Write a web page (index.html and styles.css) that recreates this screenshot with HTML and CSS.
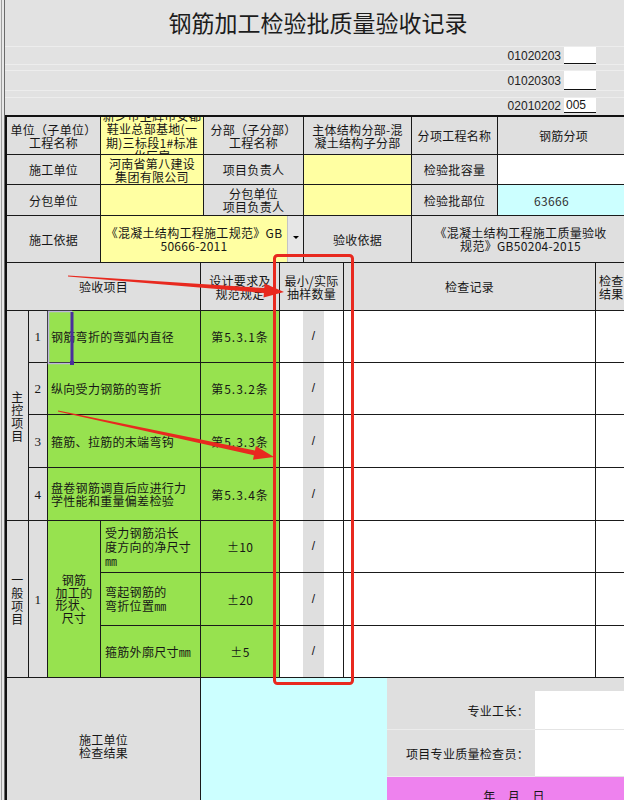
FILE: index.html
```html
<!DOCTYPE html>
<html lang="zh-CN">
<head>
<meta charset="utf-8">
<title>钢筋加工检验批质量验收记录</title>
<link rel="stylesheet" href="styles.css">
</head>
<body>
<div class="sheet">
  <div class="title-area">
    <div class="title">钢筋加工检验批质量验收记录</div>
    <div class="code-row r1"><span class="code">01020203</span><span class="box"></span></div>
    <div class="code-gap gap1"></div>
    <div class="code-row r2"><span class="code">01020303</span><span class="box"></span></div>
    <div class="code-gap gap2"></div>
    <div class="code-row r3"><span class="code">02010202</span><span class="box">005</span></div>
  </div>

  <div class="info">
    <div class="c">单位（子单位）<br>工程名称</div>
    <div class="c y tall">新乡市卫辉市安都<br>鞋业总部基地(一<br>期)三标段1#标准<br>化厂房</div>
    <div class="c">分部（子分部）<br>工程名称</div>
    <div class="c">主体结构分部-混<br>凝土结构子分部</div>
    <div class="c">分项工程名称</div>
    <div class="c">钢筋分项</div>

    <div class="c">施工单位</div>
    <div class="c y">河南省第八建设<br>集团有限公司</div>
    <div class="c">项目负责人</div>
    <div class="c y"></div>
    <div class="c">检验批容量</div>
    <div class="c w"></div>

    <div class="c">分包单位</div>
    <div class="c y"></div>
    <div class="c">分包单位<br>项目负责人</div>
    <div class="c y"></div>
    <div class="c">检验批部位</div>
    <div class="c cy part">63666</div>

    <div class="c">施工依据</div>
    <div class="c y basis">
      <div class="basis-text">《混凝土结构工程施工规范》GB<br>50666-2011</div>
      <div class="dd"><span class="tri"></span></div>
    </div>
    <div class="c">验收依据</div>
    <div class="c span2">《混凝土结构工程施工质量验收<br>规范》GB50204-2015</div>
  </div>

  <div class="items">
    <div class="c hd span4">验收项目</div>
    <div class="c hd">设计要求及<br>规范规定</div>
    <div class="c hd">最小/实际<br>抽样数量</div>
    <div class="c hd">检查记录</div>
    <div class="c hd left">检查<br>结果</div>

    <div class="c vert main">主<br>控<br>项<br>目</div>
    <div class="c num">1</div>
    <div class="c g span2 txt">钢筋弯折的弯弧内直径</div>
    <div class="c g clause">第5.3.1条</div>
    <div class="c sample"><span class="s1"></span><span class="s2">/</span><span class="s3"></span></div>
    <div class="c w"></div>
    <div class="c w"></div>

    <div class="c num">2</div>
    <div class="c g span2 txt">纵向受力钢筋的弯折</div>
    <div class="c g clause">第5.3.2条</div>
    <div class="c sample"><span class="s1"></span><span class="s2">/</span><span class="s3"></span></div>
    <div class="c w"></div>
    <div class="c w"></div>

    <div class="c num">3</div>
    <div class="c g span2 txt">箍筋、拉筋的末端弯钩</div>
    <div class="c g clause">第5.3.3条</div>
    <div class="c sample"><span class="s1"></span><span class="s2">/</span><span class="s3"></span></div>
    <div class="c w"></div>
    <div class="c w"></div>

    <div class="c num">4</div>
    <div class="c g span2 txt">盘卷钢筋调直后应进行力<br>学性能和重量偏差检验</div>
    <div class="c g clause">第5.3.4条</div>
    <div class="c sample"><span class="s1"></span><span class="s2">/</span><span class="s3"></span></div>
    <div class="c w"></div>
    <div class="c w"></div>

    <div class="c vert general">一<br>般<br>项<br>目</div>
    <div class="c num gnum">1</div>
    <div class="c g gname">钢筋<br>加工的<br>形状、<br>尺寸</div>
    <div class="c g txt sub">受力钢筋沿长<br>度方向的净尺寸<br>㎜</div>
    <div class="c g">±10</div>
    <div class="c sample"><span class="s1"></span><span class="s2">/</span><span class="s3"></span></div>
    <div class="c w"></div>
    <div class="c w"></div>

    <div class="c g txt sub">弯起钢筋的<br>弯折位置㎜</div>
    <div class="c g">±20</div>
    <div class="c sample"><span class="s1"></span><span class="s2">/</span><span class="s3"></span></div>
    <div class="c w"></div>
    <div class="c w"></div>

    <div class="c g txt sub">箍筋外廓尺寸㎜</div>
    <div class="c g">±5</div>
    <div class="c sample"><span class="s1"></span><span class="s2">/</span><span class="s3"></span></div>
    <div class="c w"></div>
    <div class="c w"></div>
  </div>

  <div class="result">
    <div class="rc rlabel">施工单位<br>检查结果</div>
    <div class="rc rcyan"></div>
    <div class="rc strip"></div>
    <div class="rc lab">专业工长：</div>
    <div class="rc wv"></div>
    <div class="rc lab">项目专业质量检查员：</div>
    <div class="rc wv"></div>
    <div class="rc date">年　月　日</div>
  </div>

  <svg class="overlay" width="624" height="800" viewBox="0 0 624 800">
    <rect x="48.5" y="311.5" width="23" height="52" fill="none" stroke="#bdb6dc" stroke-width="1.5"/>
    <line x1="72" y1="312" x2="72" y2="363" stroke="#4a2f9c" stroke-width="3"/>
    <rect x="70" y="361" width="4" height="4" fill="#4a2f9c"/>
    <rect x="274.5" y="255.5" width="78" height="428" rx="3" ry="3" fill="none" stroke="#e8291f" stroke-width="3"/>
    <polygon fill="#e8291f" points="68.04,275.5 264.24,288.03 264.58,283.54 284,292 263.54,297.5 263.88,293.01 67.96,276.5"/>
    <polygon fill="#e8291f" points="58.10,410.51 254.96,450.38 255.90,445.98 274,457 252.98,459.68 253.92,455.28 57.90,411.49"/>
  </svg>
</div>
</body>
</html>
```
FILE: styles.css
```css
* { box-sizing: border-box; }
html, body { margin: 0; padding: 0; }
body {
  width: 624px;
  height: 800px;
  overflow: hidden;
  background: #e2e2e2;
  font-family: "Noto Sans CJK SC", "Noto Sans", sans-serif;
  font-size: 12px;
  color: #161616;
}
.sheet {
  position: relative;
  width: 624px;
  height: 800px;
  overflow: hidden;
  padding-left: 5px;
  background: linear-gradient(90deg, #e8e8e8 0 1px, #9e9e9e 1px 2px, #e8e8e8 2px 4px, #6a6a6a 4px 5px, #e2e2e2 5px);
}

/* title area */
.title-area {
  height: 115px;
  display: flex;
  flex-direction: column;
}
.title {
  height: 46px;
  line-height: 44px;
  text-align: center;
  padding-left: 7px;
  font-size: 23px;
  color: #1c1c1c;
}
.code-row {
  display: flex;
  justify-content: flex-end;
  padding-right: 28px;
  border-top: 1px solid #ededed;
}
.r1 { height: 18px; }
.r2 { height: 20px; }
.r3 { height: 16px; }
.code-gap { border-top: 1px solid #ededed; }
.gap1 { height: 6px; }
.gap2 { height: 7px; }
.code {
  font-family: "Liberation Sans", sans-serif;
  font-size: 12px;
  color: #222;
  margin-right: 3px;
  display: flex;
  align-items: center;
}
.box {
  width: 32px;
  background: #fff;
  border-bottom: 1px solid #111;
  font-family: "Liberation Sans", sans-serif;
  font-size: 12px;
  padding-left: 2px;
  display: flex;
  align-items: center;
}

/* generic cell */
.c {
  border-right: 1px solid #1a1a1a;
  border-bottom: 1px solid #1a1a1a;
  background: #dfdfdf;
  display: flex;
  align-items: center;
  justify-content: center;
  text-align: center;
  line-height: 13px;
  white-space: nowrap;
  overflow: hidden;
  letter-spacing: 0.3px;
}
.y { background: #ffffa2; }
.g { background: #97e24f; }
.w { background: #ffffff; }
.cy { background: #ccffff; }

/* info block */
.info {
  display: grid;
  grid-template-columns: 94px 103px 100px 108px 86px 132px;
  grid-template-rows: 38px 30px 31px 47px;
  border-top: 2px solid #111;
  border-left: 2px solid #111;
  width: max-content;
}
.tall { line-height: 13.5px; }
.part { padding-right: 24px; color: #333; }
.basis { grid-column: 2 / 4; padding: 0; align-items: stretch; }
.basis-text {
  flex: 1;
  display: flex;
  align-items: center;
  justify-content: center;
}
.dd {
  width: 16px;
  background: #e6e6e6;
  border-left: 1px solid #c4c4c4;
  display: flex;
  justify-content: center;
  padding-top: 20px;
}
.tri {
  width: 0;
  height: 0;
  border-left: 3px solid transparent;
  border-right: 3px solid transparent;
  border-top: 3px solid #000;
}
.span2 { grid-column: span 2; }
.span4 { grid-column: span 4; }

/* items block */
.items {
  display: grid;
  grid-template-columns: 22px 19px 53px 100px 79px 64px 252px 44px;
  grid-template-rows: 48px 52px 52px 53px 53px 52px 53px 52px;
  border-left: 2px solid #111;
  width: max-content;
}
.left { justify-content: flex-start; padding-left: 3px; }
.vert { line-height: 13px; }
.main { grid-row: 2 / 6; grid-column: 1; padding-top: 1px; }
.general { grid-row: 6 / 9; grid-column: 1; }
.num { font-family: "Liberation Serif", serif; font-size: 13px; }
.gnum { grid-row: 6 / 9; grid-column: 2; }
.gname { grid-row: 6 / 9; grid-column: 3; line-height: 12.5px; }
.txt { justify-content: flex-start; text-align: left; padding-left: 3px; }
.sub { padding-left: 4px; line-height: 14px; }
.clause { letter-spacing: 1px; }
.sample { padding: 0; align-items: stretch; justify-content: flex-start; background: #fff; }
.s1 { width: 23px; background: #fff; }
.s2 {
  width: 21px;
  background: #dfdfdf;
  display: flex;
  align-items: center;
  justify-content: center;
  font-family: "Liberation Sans", sans-serif;
}
.s3 { flex: 1; background: #fff; }

/* result block */
.result {
  display: grid;
  grid-template-columns: 194px 186px 148px 112px;
  grid-template-rows: 13px 39px 47px 37px;
  border-left: 2px solid #111;
  width: max-content;
}
.rc {
  display: flex;
  align-items: center;
  line-height: 13px;
  white-space: nowrap;
  letter-spacing: 0.3px;
}
.rlabel {
  grid-row: 1 / 5;
  grid-column: 1;
  background: #dfdfdf;
  border-right: 1px solid #1a1a1a;
  justify-content: center;
  text-align: center;
}
.rcyan { grid-row: 1 / 5; grid-column: 2; background: #ccffff; }
.strip { grid-row: 1; grid-column: 3 / 5; background: #dfdfdf; }
.lab {
  background: #dfdfdf;
  justify-content: flex-end;
  padding-right: 6px;
  border-bottom: 1px solid #ececec;
}
.wv { background: #fff; border-bottom: 1px solid #e4e4e4; }
.date {
  grid-column: 3 / 5;
  background: #ee82ee;
  justify-content: center;
  padding-right: 6px;
  word-spacing: 4px;
}

/* annotation overlay */
.overlay {
  position: absolute;
  left: 0;
  top: 0;
  pointer-events: none;
}
```
